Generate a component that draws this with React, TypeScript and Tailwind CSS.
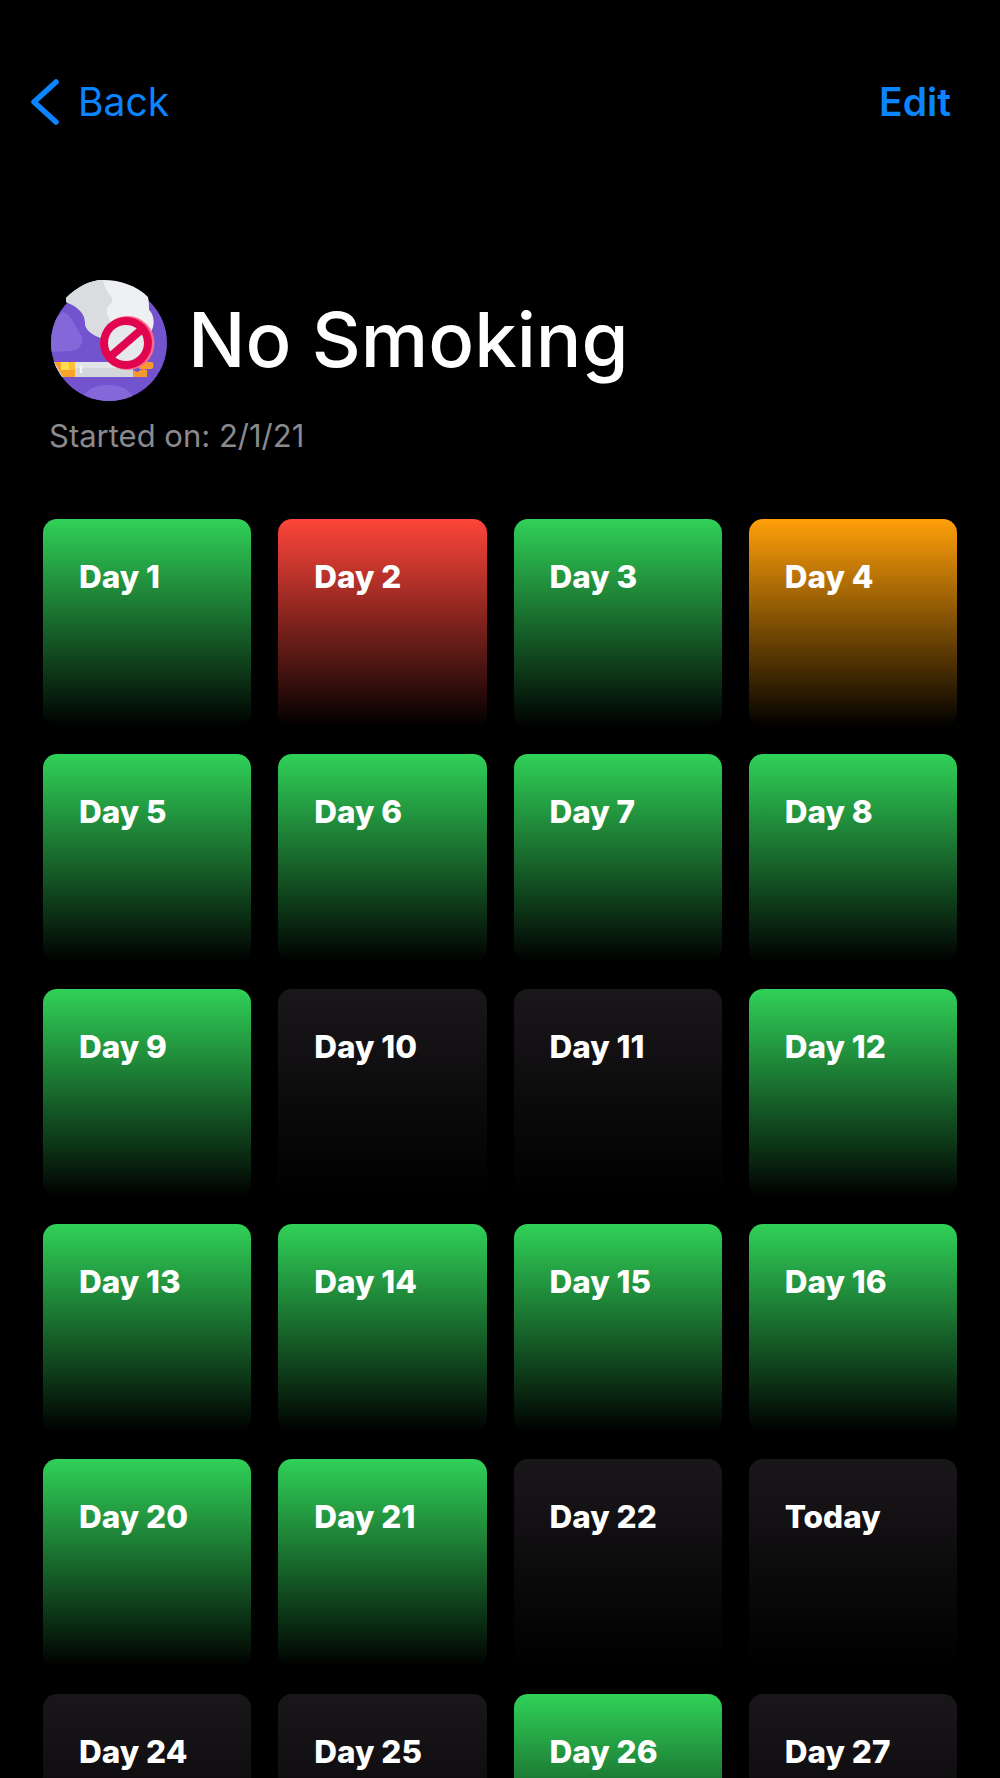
const days: [string, string][] = [
  ["Day 1", "g"], ["Day 2", "r"], ["Day 3", "g"], ["Day 4", "o"],
  ["Day 5", "g"], ["Day 6", "g"], ["Day 7", "g"], ["Day 8", "g"],
  ["Day 9", "g"], ["Day 10", "k"], ["Day 11", "k"], ["Day 12", "g"],
  ["Day 13", "g"], ["Day 14", "g"], ["Day 15", "g"], ["Day 16", "g"],
  ["Day 20", "g"], ["Day 21", "g"], ["Day 22", "k"], ["Today", "k"],
  ["Day 24", "k"], ["Day 25", "k"], ["Day 26", "g"], ["Day 27", "k"],
];

const bg: Record<string, string> = {
  g: "from-[#30d158]",
  r: "from-[#ff453a]",
  o: "from-[#ff9f0a]",
  k: "from-[#1a171a]",
};

function Logo() {
  return (
    <svg width="116" height="122" viewBox="0 0 116 122" className="shrink-0 mt-[2px]">
      <defs>
        <clipPath id="c"><circle cx="58" cy="63" r="58" /></clipPath>
      </defs>
      <g clipPath="url(#c)">
        <rect width="116" height="122" fill="#7453cf" />
        <path d="M0 43 L12 32 C20 34 24 46 31 57 C32 66 26 71 20 71 L0 72 Z" fill="#8468da" />
        <path d="M30 122 C32 110 44 105 57 105 C70 105 82 110 84 122 Z" fill="#8468da" />
        <rect x="3" y="82" width="79" height="15" fill="#d3d7db" />
        <rect x="3" y="82" width="79" height="6" fill="#e2e5e8" />
        <rect x="29" y="85" width="2" height="8" fill="#f4f5f6" />
        <path d="M3 82 H24 V97 H12 Z" fill="#f9a428" />
        <path d="M10 82 H24 V90 H10 Z" fill="#fcc132" />
        <path d="M10 82 H18 V90 H10 Z" fill="#ffdb4d" />
        <path d="M82 90 L86 92 L92 89 L96 90 V97 H82 Z" fill="#f59a2e" />
      </g>
      <path d="M88 82 H100 Q102.500 82 102.500 85 Q102.500 89 100 89 H88 Z" fill="#f59a2e" />
      <path d="M15 18 C25 8 38 0 52 0 C70 0 86 6 97 17 C98 22 98 26 98 30 C103 34 105 46 99 53 L50 58 C40 54 34 50 34 42 C34 34 28 27 15 22 Z" fill="#eef0f3" />
      <path d="M15 18 C25 8 38 0 52 0 C54 6 55 10 57 13 C61 17 62 20 61 22 C56 26 55 30 56 32 C56 36 58 38 60 42 L50 58 C40 54 34 50 34 42 C34 34 28 27 15 22 Z" fill="#d9dde0" />
      <circle cx="76.500" cy="63" r="27" fill="#ff6b8b" />
      <circle cx="75" cy="63" r="26" fill="#e0054e" />
      <circle cx="75" cy="63" r="18" fill="#e6e9ec" />
      <path d="M60 76 L90 50" stroke="#e0054e" strokeWidth="8" />
    </svg>
  );
}

export default function App() {
  return (
    <div className="h-[1778px] overflow-hidden bg-black text-white font-['Inter',sans-serif]">
      <div className="flex items-center justify-between pt-[79px] pl-[31px] pr-[49px]">
        <div className="flex items-center gap-[19px] text-[#0a84ff]">
          <svg width="28" height="46" viewBox="0 0 28 46" fill="none" stroke="currentColor" strokeWidth="5.5" strokeLinecap="round" strokeLinejoin="round">
            <path d="M25 3 L3 23 L25 43" />
          </svg>
          <span className="text-[39px] leading-[46px]">Back</span>
        </div>
        <span className="text-[39px] leading-[46px] font-semibold text-[#0a84ff]">Edit</span>
      </div>

      <div className="mt-[153px] pl-[51px] flex items-start gap-[21px]">
        <Logo />
        <h1 className="mt-[15px] text-[76px] leading-[92px] font-medium">No Smoking</h1>
      </div>
      <p className="mt-[16px] pl-[49px] text-[31px] leading-[36px] text-[#8a8a8e]">Started on: 2/1/21</p>

      <div className="mt-[65px] mx-[43px] grid grid-cols-4 gap-x-[27px] gap-y-[27px]">
        {days.map(([label, c]) => (
          <div key={label} className={`h-[208px] rounded-[14px] bg-linear-to-b/srgb to-black pl-[36px] pt-[40px] ${bg[c]}`}>
            <span className="block text-[31.500px] leading-[36px] font-extrabold">{label}</span>
          </div>
        ))}
      </div>
    </div>
  );
}
